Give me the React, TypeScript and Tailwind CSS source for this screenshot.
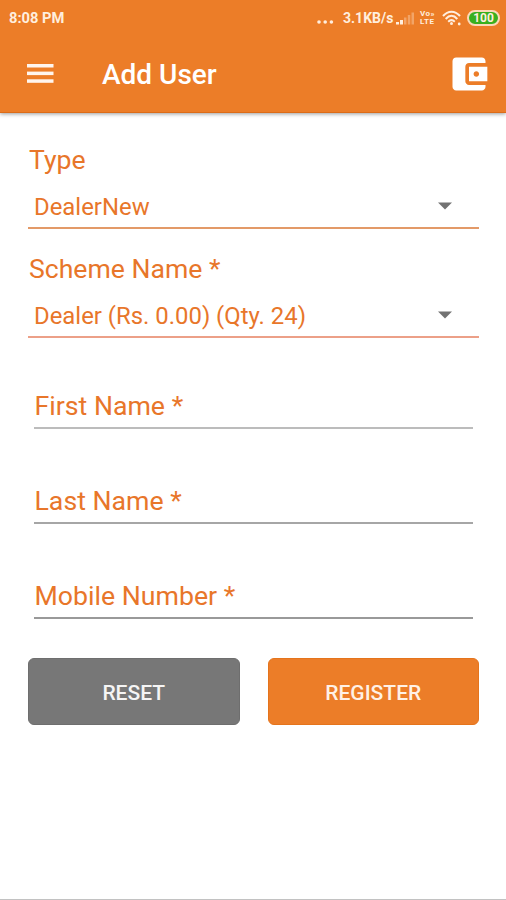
import { useState } from 'react';

interface SelectFieldProps {
  label: string;
  value: string;
  lineClass: string;
}

interface TextFieldProps {
  label: string;
  name: string;
  value: string;
  lineClass: string;
  onChange: (name: string, value: string) => void;
}

const fields = [
  { name: 'firstName', label: 'First Name *', lineClass: 'border-[#bcbcbc]' },
  { name: 'lastName', label: 'Last Name *', lineClass: 'border-[#a6a6a6]' },
  { name: 'mobile', label: 'Mobile Number *', lineClass: 'border-[#999999]' },
];

const emptyForm: Record<string, string> = { firstName: '', lastName: '', mobile: '' };

function StatusBar() {
  return (
    <div className="flex h-9 items-center justify-between pl-[9px] pr-[6px] text-[#ffeede]">
      <span className="text-[14.7px] font-bold">8:08 PM</span>
      <div className="flex items-center">
        <svg width="17" height="4" viewBox="0 0 17 4" fill="currentColor" className="mr-[9px] mt-[8px]">
          <circle cx="2" cy="2" r="1.8" />
          <circle cx="8.2" cy="2" r="1.8" />
          <circle cx="14.4" cy="2" r="1.8" />
        </svg>
        <span className="w-[52px] whitespace-nowrap text-[14px] font-bold">3.1KB/s</span>
        {/* Signal */}
        <svg width="20" height="13" viewBox="0 0 20 13" fill="currentColor" className="mt-px">
          <rect x="1" y="10" width="3" height="2.5" />
          <rect x="5" y="8" width="3" height="4.5" />
          <rect x="9" y="5.5" width="2.5" height="7" opacity="0.35" />
          <rect x="12.8" y="3" width="2.5" height="9.5" opacity="0.35" />
          <rect x="16.5" y="0.5" width="2.5" height="12" opacity="0.35" />
        </svg>
        <div className="ml-[5px] flex w-[17px] flex-col text-[8px] font-bold tracking-[0.5px]">
          <span className="h-[8px] leading-[8px]">Vo»</span>
          <span className="h-[8px] leading-[8px]">LTE</span>
        </div>
        {/* Wifi */}
        <svg width="20" height="16" viewBox="0 0 20 16" fill="none" stroke="currentColor" strokeWidth="2" className="ml-[5px]">
          <path d="M1 6C6 .2 13 .2 18 6" />
          <path d="M3.7 9C7.5 4.800 11.500 4.800 15.300 9" />
          <path d="M6.200 11.700c2.300-2.200 4.300-2.200 6.600 0" />
          <circle cx="9.5" cy="13.5" r="1.5" fill="currentColor" stroke="none" />
          <circle cx="17.2" cy="14" r="1.4" fill="currentColor" stroke="none" />
        </svg>
        <span className="ml-[5px] flex h-4 w-[33px] items-center justify-center rounded-full border-2 border-[#fbd9b8] bg-[#38b01e] text-[12px] font-bold leading-none">
          100
        </span>
      </div>
    </div>
  );
}

function SelectField({ label, value, lineClass }: SelectFieldProps) {
  return (
    <div className="flex flex-col">
      <span className="h-8 pl-px text-[26.6px] leading-8">{label}</span>
      <button
        type="button"
        className={`mt-[9px] flex h-[44px] items-center justify-between border-b-2 pl-[6px] pr-[27px] text-left text-[23.9px] ${lineClass}`}
      >
        <span className="pt-[3px]">{value}</span>
        <svg width="14" height="8" viewBox="0 0 14 8" fill="#727272">
          <path d="M0 .5h14L7 7.5z" />
        </svg>
      </button>
    </div>
  );
}

function TextField({ label, name, value, lineClass, onChange }: TextFieldProps) {
  return (
    <input
      name={name}
      value={value}
      placeholder={label}
      onChange={(e) => onChange(name, e.target.value)}
      className={`h-[47px] w-full border-b-2 bg-transparent pl-[0.5px] pt-[2px] text-[26.7px] outline-none placeholder:text-[#e8762a] ${lineClass}`}
    />
  );
}

export default function App() {
  const [form, setForm] = useState(emptyForm);

  const handleChange = (name: string, value: string) => {
    setForm((prev) => ({ ...prev, [name]: value }));
  };

  return (
    <div className="flex h-[900px] w-[506px] flex-col border-b border-[#c2c2c2] bg-white font-['Roboto',sans-serif] text-[#e8762a]">
      <header className="h-[113px] border-b border-[#dc6c18] bg-[#ec7d28] shadow-[0_1px_4px_rgba(0,0,0,0.4)]">
        <StatusBar />
        <div className="flex h-[76px] items-center pl-[27px] pr-[15px] text-white">
          <svg width="27" height="20" viewBox="0 0 27 20" fill="#fff5ee">
            <rect y="0" width="26.5" height="3.5" />
            <rect y="7.6" width="26.5" height="3.5" />
            <rect y="15.3" width="26.5" height="3.5" />
          </svg>
          <h1 className="ml-[48px] flex-1 pt-[2px] text-[28px] font-medium">Add User</h1>
          <svg width="44" height="44" viewBox="0 0 24 24" fill="currentColor">
            <path d="M21 18v1c0 1.100-.9 2-2 2H5c-1.110 0-2-.9-2-2V5c0-1.100.89-2 2-2h14c1.100 0 2 .9 2 2v1h-9c-1.110 0-2 .9-2 2v8c0 1.100.89 2 2 2h9zm-9-2h10V8H12v8zm4-2.500c-.83 0-1.500-.67-1.500-1.500s.67-1.500 1.500-1.500 1.500.67 1.500 1.500-.67 1.500-1.500 1.500z" />
          </svg>
        </div>
      </header>

      <main className="flex flex-col pl-[28px] pr-[27px] pt-[31px]">
        <div className="flex flex-col gap-[24px]">
          <SelectField label="Type" value="DealerNew" lineClass="border-[#e39a68]" />
          <SelectField label="Scheme Name *" value="Dealer (Rs. 0.00) (Qty. 24)" lineClass="border-[#eca088]" />
        </div>

        <div className="mt-[44px] flex flex-col gap-[48px] px-[6px]">
          {fields.map((field) => (
            <TextField
              key={field.name}
              name={field.name}
              label={field.label}
              value={form[field.name]}
              lineClass={field.lineClass}
              onChange={handleChange}
            />
          ))}
        </div>

        <div className="mt-[39px] grid grid-cols-2 gap-[28px]">
          <button
            type="button"
            onClick={() => setForm(emptyForm)}
            className="h-[67px] rounded-[6px] border border-[#6e6e6e] bg-[#777777] pt-[4px] text-[21px] font-medium text-[#f5f5f5]"
          >
            RESET
          </button>
          <button
            type="button"
            className="h-[67px] rounded-[6px] border border-[#e5741c] bg-[#ec7d28] pt-[4px] text-[21px] font-medium text-[#fff1e6]"
          >
            REGISTER
          </button>
        </div>
      </main>
    </div>
  );
}
